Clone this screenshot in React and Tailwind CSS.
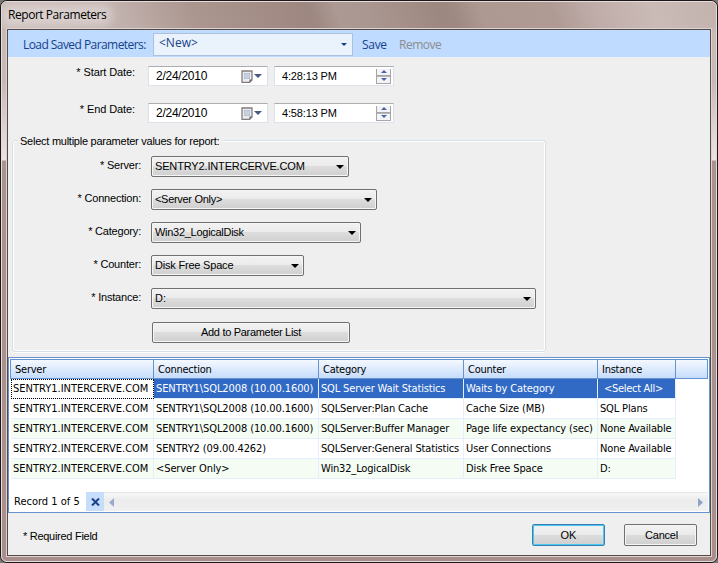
import React, { useState } from 'react';

const columns = [
  { key: 'server', title: 'Server', width: 'w-[143px]', text: '' },
  { key: 'connection', title: 'Connection', width: 'w-[165px]', text: 'tracking-[-0.1px]' },
  { key: 'category', title: 'Category', width: 'w-[145px]', text: 'tracking-[-0.16px]' },
  { key: 'counter', title: 'Counter', width: 'w-[134px]', text: 'tracking-[-0.12px]' },
  { key: 'instance', title: 'Instance', width: 'w-[78px]', text: 'tracking-[-0.16px]' },
];

const records = [
  {
    server: 'SENTRY1.INTERCERVE.COM',
    connection: 'SENTRY1\\SQL2008 (10.00.1600)',
    category: 'SQL Server Wait Statistics',
    counter: 'Waits by Category',
    instance: '<Select All>',
  },
  {
    server: 'SENTRY1.INTERCERVE.COM',
    connection: 'SENTRY1\\SQL2008 (10.00.1600)',
    category: 'SQLServer:Plan Cache',
    counter: 'Cache Size (MB)',
    instance: 'SQL Plans',
  },
  {
    server: 'SENTRY1.INTERCERVE.COM',
    connection: 'SENTRY1\\SQL2008 (10.00.1600)',
    category: 'SQLServer:Buffer Manager',
    counter: 'Page life expectancy (sec)',
    instance: 'None Available',
  },
  {
    server: 'SENTRY2.INTERCERVE.COM',
    connection: 'SENTRY2 (09.00.4262)',
    category: 'SQLServer:General Statistics',
    counter: 'User Connections',
    instance: 'None Available',
  },
  {
    server: 'SENTRY2.INTERCERVE.COM',
    connection: '<Server Only>',
    category: 'Win32_LogicalDisk',
    counter: 'Disk Free Space',
    instance: 'D:',
  },
];

const params = [
  { label: 'Server', value: 'SENTRY2.INTERCERVE.COM', width: 'w-[198px]', text: 'tracking-[-0.15px]' },
  { label: 'Connection', value: '<Server Only>', width: 'w-[226px]', text: 'tracking-[-0.3px]' },
  { label: 'Category', value: 'Win32_LogicalDisk', width: 'w-[210px]', text: 'tracking-[-0.28px]' },
  { label: 'Counter', value: 'Disk Free Space', width: 'w-[153px]', text: 'tracking-[-0.2px]' },
  { label: 'Instance', value: 'D:', width: 'w-[385px]', text: '' },
];

const buttonFace =
  'rounded-[2px] border border-[#707070] bg-[linear-gradient(#f2f2f2_0%,#ebebeb_48%,#dddddd_50%,#cfcfcf_100%)] shadow-[inset_0_0_0_1px_#f6f6f6]';

const CalendarIcon = () => (
  <svg width="12" height="13" viewBox="0 0 12 13">
    <path d="M1 1h10v9l-2.500 2.500H1z" fill="#e9edf3" stroke="#857b7b" strokeWidth="1.300" />
    <path d="M11 9.500L8.500 12.500V9.500z" fill="#6d6464" />
    <path d="M3 3h6v6H3z" fill="#a9b7ca" />
    <path d="M3 5h6M3 7h6M5 3v6M7 3v6" stroke="#e6ebf2" strokeWidth=".6" />
  </svg>
);

const Arrow = ({ color = '#000', className = '' }) => (
  <svg className={className} width="8" height="4" viewBox="0 0 8 4">
    <path d="M0 0h8L4 4z" fill={color} />
  </svg>
);

const Spinner = () => (
  <div className="flex h-[15px] w-[15px] flex-col border border-t-0 border-[#a5a5ab] bg-[#f4f4f4]">
    <div className="flex flex-1 items-center justify-center border-b border-[#a5a5ab]">
      <svg width="6" height="3" viewBox="0 0 6 3">
        <path d="M0 3h6L3 0z" fill="#4a63a8" />
      </svg>
    </div>
    <div className="flex flex-1 items-center justify-center border-t border-[#b4b4b8]">
      <svg width="6" height="3" viewBox="0 0 6 3">
        <path d="M0 0h6L3 3z" fill="#4a63a8" />
      </svg>
    </div>
  </div>
);

const DateRow = ({ label, date, time }) => (
  <div className="flex h-[37px] items-start">
    <div className="w-[127px] text-right text-[11px] leading-[13px] tracking-[-0.1px]">* {label}:</div>
    <div className="ml-[13px] flex h-5 w-[120px] items-center border border-[#dde2ea] border-t-[#abadb3] bg-white pl-[7px] text-[11px]">
      <span className="w-[85px] text-[12px] tracking-[-0.25px]">{date}</span>
      <CalendarIcon />
      <Arrow color="#47597f" className="ml-px" />
    </div>
    <div className="ml-1.5 flex h-5 w-[120px] items-center justify-between border border-[#dde2ea] border-t-[#abadb3] bg-white pl-[7px] pr-0.5 text-[11px]">
      <span className="tracking-[-0.15px]">{time}</span>
      <Spinner />
    </div>
  </div>
);

const ParamRow = ({ label, value, width, text }) => (
  <div className="flex h-[33px] items-start">
    <div className="w-[128px] pt-[3px] text-right text-[11px] leading-[13px] tracking-[-0.2px]">* {label}:</div>
    <div className={`ml-[10px] flex h-[21px] items-center justify-between pl-[3px] pr-1 text-[11px] ${buttonFace} ${width}`}>
      <span className={text}>{value}</span>
      <Arrow />
    </div>
  </div>
);

const Toolbar = () => (
  <div className="flex h-[27px] items-center bg-[#bfdbff] font-['Open_Sans','Noto_Sans',sans-serif] text-[12px] text-[#15428b]">
    <span className="ml-[15px] w-[130px] whitespace-nowrap pt-0.5 tracking-[-0.56px]">Load Saved Parameters:</span>
    <div className="mt-px flex h-[23px] w-[200px] items-center justify-between border border-[#abc1de] bg-[#eaf2fb] pl-[5px] pr-[5px]">
      <span className="-mt-0.5">&lt;New&gt;</span>
      <svg width="6" height="3" viewBox="0 0 6 3">
        <path d="M0 0h6L3 3z" fill="#15428b" />
      </svg>
    </div>
    <span className="ml-[9px] w-[37px] pt-0.5 tracking-[-0.3px]">Save</span>
    <span className="pt-0.5 tracking-[-0.5px] text-[#8d8d8d]">Remove</span>
  </div>
);

const ParameterGrid = () => {
  const [selected, setSelected] = useState(0);

  const cellClass = (row, col) => {
    if (row === selected && col === 0) return 'outline-1 -outline-offset-1 outline-dotted outline-black bg-white border-[#e3effb]';
    if (row === selected) return 'bg-[#316ac5] text-white border-[#e3effb]';
    return row % 2 === 0 ? 'bg-[#f4fcf4] border-[#e3effb]' : 'bg-white border-[#e3effb]';
  };

  return (
    <div className="flex h-[156px] flex-col border border-[#6593cf] bg-white p-px font-['DejaVu_Sans_Condensed','DejaVu_Sans',sans-serif] text-[11px]">
      <div className="flex h-5 w-[698px] shrink-0 border border-r-0 border-[#6593cf] bg-[linear-gradient(#f5f9ff,#c6dcfb)] tracking-[-0.25px]">
        {columns.map((col) => (
          <div key={col.key} className={`shrink-0 border-r border-[#6593cf] pl-1 leading-[19px] ${col.width}`}>
            {col.title}
          </div>
        ))}
        <div className="flex-1 border-r border-[#6593cf]" />
      </div>
      {records.map((record, row) => (
        <div key={row} className="flex h-5 shrink-0 pl-px" onClick={() => setSelected(row)}>
          {columns.map((col, i) => (
            <div
              key={col.key}
              className={`shrink-0 whitespace-nowrap border-b border-r pl-0.5 leading-[19px] ${col.width} ${col.text} ${cellClass(row, i)}`}
            >
              <span className={record[col.key] === '<Select All>' ? 'pl-1 tracking-[-0.3px]' : ''}>{record[col.key]}</span>
            </div>
          ))}
        </div>
      ))}
      <div className="mt-auto flex h-[19px] items-center">
        <span className="w-[76px] whitespace-nowrap pl-1 pt-0.5">Record 1 of 5</span>
        <div className="flex h-[19px] w-[18px] items-center justify-center bg-[#c6ddfb]">
          <svg width="9" height="8" viewBox="0 0 9 8">
            <path d="M1 .5l7 7M8 .5l-7 7" stroke="#15428b" strokeWidth="2" />
          </svg>
        </div>
        <div className="flex h-[19px] flex-1 items-center justify-between border-t border-[#e6e6e6] bg-[linear-gradient(#f8f8f8,#ececec_40%,#f1f1f1)] px-[5px]">
          <svg width="5" height="9" viewBox="0 0 5 9">
            <path d="M5 0v9L0 4.500z" fill="#9ba9cc" />
          </svg>
          <svg width="5" height="9" viewBox="0 0 5 9">
            <path d="M0 0v9L5 4.500z" fill="#8fa2cb" />
          </svg>
        </div>
      </div>
    </div>
  );
};

export default function App() {
  return (
    <div className="h-[563px] w-[718px] bg-[#777] font-['Liberation_Sans',Arial,sans-serif] text-[11px] text-black">
      <div className="h-full w-full rounded-[7px] border border-[#1c1719] bg-[#ac9691]">
        <div className="flex h-full w-full flex-col rounded-[6px] border border-[#e6dcdb] bg-[linear-gradient(#c9b9b5_0px,#c9b9b5_80px,#ece4e2_158px,#aa9490_159px,#a98f8b_100%)] px-1 pb-1">
          <div className="-mx-1 flex h-[26px] shrink-0 items-center overflow-hidden rounded-t-[5px] bg-[linear-gradient(70deg,#c9bbb8_0%,#c1b1ad_17%,#ac9690_27%,#9d8780_43%,#9f8983_44%,#ac9993_47%,#ab9791_51%,#9d8781_61%,#9e8882_63%,#ae9992_67%,#b09b94_77%,#c0adaa_83%,#cabbb7_91%,#c3b2ad_100%)] pl-1.5">
            <span className="rounded-full bg-white/35 font-['Open_Sans','Noto_Sans',sans-serif] text-[12px] leading-[8px] tracking-[-0.45px] shadow-[0_0_10px_7px_rgba(255,255,255,0.35)]">
              Report Parameters
            </span>
          </div>
          <div className="flex-1 border border-[#ded3d1]">
            <div className="flex h-full flex-col border border-[#51494a] bg-[#efefef]">
              <Toolbar />
              <div className="pt-[9px]">
                <DateRow label="Start Date" date="2/24/2010" time="4:28:13 PM" />
                <DateRow label="End Date" date="2/24/2010" time="4:58:13 PM" />
              </div>
              <div className="ml-1 h-[212px] w-[534px] rounded-[3px] border border-[#d5dfe5] shadow-[inset_0_0_0_1px_#fff,0_1px_0_#fff]">
                <div className="-mt-[7px] ml-[5px] h-[14px] w-[205px] whitespace-nowrap bg-[#efefef] pl-0.5 leading-[14px] tracking-[-0.25px]">
                  Select multiple parameter values for report:
                </div>
                <div className="pt-2">
                  {params.map((param) => (
                    <ParamRow key={param.label} {...param} />
                  ))}
                </div>
                <button className={`ml-[139px] mt-px block h-[21px] w-[198px] text-[11px] leading-[19px] tracking-[-0.3px] ${buttonFace}`}>
                  Add to Parameter List
                </button>
              </div>
              <div className="mt-auto">
                <ParameterGrid />
              </div>
              <div className="flex h-[42px] shrink-0 items-start pl-[15px] pr-[13px] pt-[11px]">
                <span className="pt-[6px] leading-[13px] tracking-[-0.28px]">* Required Field</span>
                <button className="ml-auto h-[22px] w-[73px] rounded-[2px] border border-[#3c7fb1] bg-[linear-gradient(#f2f2f2_0%,#ebebeb_48%,#dddddd_50%,#cfcfcf_100%)] leading-[19px] shadow-[inset_0_0_0_1px_#48c8f0]">
                  OK
                </button>
                <button className={`ml-[19px] h-[22px] w-[73px] pl-0.5 tracking-[-0.2px] ${buttonFace}`}>Cancel</button>
              </div>
            </div>
          </div>
        </div>
      </div>
    </div>
  );
}
